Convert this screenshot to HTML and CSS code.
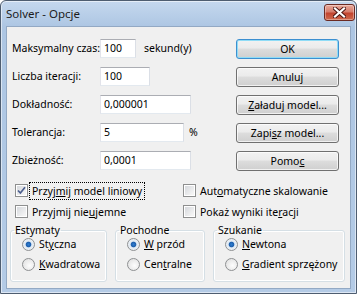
FILE: index.html
```html
<!DOCTYPE html>
<html lang="pl">

<head>
    <meta charset="UTF-8">
    <title>Solver - Opcje</title>
    <link rel="stylesheet" href="styles.css">
</head>

<body>
    <div class="window">
        <div class="titlebar">
            <span class="title">Solver - Opcje</span>
            <button class="close" aria-label="Zamknij">
                <svg width="13" height="11" viewBox="0 0 13 11">
                    <path d="M2 1.5 L11 9.5 M11 1.5 L2 9.5" stroke="#4a1410" stroke-width="4" stroke-linecap="square" fill="none" />
                    <path d="M2 1.5 L11 9.5 M11 1.5 L2 9.5" stroke="#ffffff" stroke-width="2.2" stroke-linecap="square" fill="none" />
                </svg>
            </button>
        </div>

        <div class="client">
            <div class="top">
                <div class="fields">
                    <div class="row">
                        <label>Maksymalny czas:</label>
                        <input type="text" class="w-time" value="100">
                        <span class="suffix">sekund(y)</span>
                    </div>
                    <div class="row">
                        <label>Liczba iteracji:</label>
                        <input type="text" class="w-iter" value="100">
                    </div>
                    <div class="row">
                        <label>Dokładność:</label>
                        <input type="text" class="w-long" value="0,000001">
                    </div>
                    <div class="row">
                        <label>Tolerancja:</label>
                        <input type="text" class="w-tol" value="5">
                        <span class="percent">%</span>
                    </div>
                    <div class="row">
                        <label>Zbieżność:</label>
                        <input type="text" class="w-long" value="0,0001">
                    </div>
                </div>

                <div class="buttons">
                    <button class="btn default">OK</button>
                    <button class="btn">Anuluj</button>
                    <button class="btn"><u>Z</u>aładuj model...</button>
                    <button class="btn">Zapi<u>s</u>z model...</button>
                    <button class="btn">Pomo<u>c</u></button>
                </div>
            </div>

            <div class="checks">
                <label class="check"><span class="box checked"><svg width="9" height="9" viewBox="0 0 9 9"><path d="M1 4.5 L3.4 7 L8 1.3" stroke="#4c5f8f" stroke-width="1.7" fill="none" /></svg></span><span class="focus">Przyj<u>m</u>ij model liniowy</span></label>
                <label class="check"><span class="box"></span><span>Aut<u>o</u>matyczne skalowanie</span></label>
                <label class="check"><span class="box"></span><span>Przyjmij nie<u>u</u>jemne</span></label>
                <label class="check"><span class="box"></span><span>Pokaż wyniki ite<u>r</u>acji</span></label>
            </div>

            <div class="groups">
                <fieldset class="group g-est">
                    <legend>Estymaty</legend>
                    <label class="radio"><span class="dot on"></span><span>St<u>y</u>czna</span></label>
                    <label class="radio"><span class="dot"></span><span><u>K</u>wadratowa</span></label>
                </fieldset>
                <fieldset class="group g-poch">
                    <legend>Pochodne</legend>
                    <label class="radio"><span class="dot on"></span><span><u>W</u> przód</span></label>
                    <label class="radio"><span class="dot"></span><span>Cen<u>t</u>ralne</span></label>
                </fieldset>
                <fieldset class="group g-szuk">
                    <legend>Szukanie</legend>
                    <label class="radio"><span class="dot on"></span><span><u>N</u>ewtona</span></label>
                    <label class="radio"><span class="dot"></span><span><u>G</u>radient sprzężony</span></label>
                </fieldset>
            </div>
        </div>
    </div>
</body>

</html>
```

FILE: styles.css
```css
body {
    margin: 0;
    font-family: 'Segoe UI', 'Noto Sans', sans-serif;
    font-size: 10.5px;
    color: #000;
}

.window {
    width: 357px;
    height: 294px;
    box-sizing: border-box;
    border: 1px solid #4e5d70;
    border-radius: 6px 6px 0 0;
    background: linear-gradient(to bottom, #c5d8ee 0, #adc6e3 26px, #b4cbe6 100%);
    box-shadow: inset 0 0 0 1px rgba(255, 255, 255, 0.55);
    padding: 0 6px 4px;
    display: flex;
    flex-direction: column;
}

.titlebar {
    height: 25px;
    display: flex;
    align-items: center;
    justify-content: space-between;
}

.title {
    font-size: 11.5px;
    color: #1c1c1c;
    margin: -1px 0 0 -1px;
}

.close {
    width: 31px;
    height: 17px;
    margin: -2px -5px 0 0;
    padding: 0;
    border: 1px solid #6b2a22;
    border-radius: 3px;
    background: linear-gradient(to bottom, #e9a99b 0, #d67d6c 45%, #c2442f 55%, #cf6a4e 100%);
    box-shadow: inset 0 0 0 1px rgba(255, 255, 255, 0.35);
    display: flex;
    align-items: center;
    justify-content: center;
}

.client {
    flex: 1;
    background: #f0f0f0;
    border: 1px solid #93a9c4;
    margin: 0 -1px;
}

.top {
    display: flex;
    justify-content: space-between;
    padding: 11px 11px 0 5px;
}

.row {
    display: flex;
    align-items: center;
    height: 20px;
    margin-bottom: 8px;
}

.row label {
    width: 88px;
    white-space: nowrap;
}

.row input {
    height: 19px;
    box-sizing: border-box;
    border: 1px solid #abadb3;
    border-color: #abadb3 #dbdfe6 #e3e9ef #e2e3ea;
    background: #fff;
    font: inherit;
    padding: 0 3px;
    margin: 0;
}

.w-time { width: 36px; }
.w-iter { width: 50px; }
.w-long { width: 91px; }
.w-tol { width: 84px; }

.suffix {
    margin-left: 8px;
}

.percent {
    margin-left: 5px;
}

.buttons {
    display: flex;
    flex-direction: column;
    gap: 8px;
    margin-top: 1px;
}

.btn {
    width: 103px;
    height: 20px;
    padding: 0;
    font: inherit;
    color: #000;
    border: 1px solid #707070;
    border-radius: 3px;
    background: linear-gradient(to bottom, #f2f2f2 0, #ebebeb 45%, #dddddd 50%, #cfcfcf 100%);
    box-shadow: inset 0 0 0 1px rgba(255, 255, 255, 0.7);
}

.btn.default {
    border-color: #3c8fd0;
    box-shadow: inset 0 0 0 1px #8fdcf6;
}

.checks {
    display: grid;
    grid-template-columns: 168px 1fr;
    padding: 2px 0 0 8px;
}

.check {
    display: flex;
    align-items: center;
    height: 21px;
}

.box {
    width: 11px;
    height: 11px;
    border: 1px solid #8e8f8f;
    background: linear-gradient(135deg, #d2d5da 0, #f4f4f4 80%);
    box-shadow: inset 0 0 0 1px #fff;
    margin-right: 4px;
    display: flex;
    align-items: center;
    justify-content: center;
}

.focus {
    outline: 1px dotted #000;
    outline-offset: 1px;
    padding: 0 1px;
    margin-left: -1px;
}

.groups {
    display: flex;
    gap: 8px;
    padding: 0 0 0 3px;
    margin-top: 1px;
}

.group {
    margin: 0;
    padding: 0 0 0 11px;
    border: 1px solid #d5dfe5;
    border-radius: 3px;
    box-shadow: inset 0 0 0 1px #fff;
    height: 59px;
    box-sizing: border-box;
}

.group legend {
    padding: 0 1px;
    margin-left: -8px;
    margin-bottom: -3px;
    line-height: 14px;
}

.g-est { width: 97px; }
.g-poch { width: 90px; }
.g-szuk { width: 132px; }

.radio {
    display: flex;
    align-items: center;
    height: 20px;
}

.dot {
    width: 11px;
    height: 11px;
    border: 1px solid #8e9092;
    border-radius: 50%;
    background: radial-gradient(circle at 60% 60%, #fdfdfd 0, #dcdcdc 100%);
    margin-right: 4px;
}

.dot.on {
    background: radial-gradient(circle at 50% 50%, #2e7ed0 0, #1d5fae 30%, #dfe9f3 42%, #f5f5f5 100%);
}
```
